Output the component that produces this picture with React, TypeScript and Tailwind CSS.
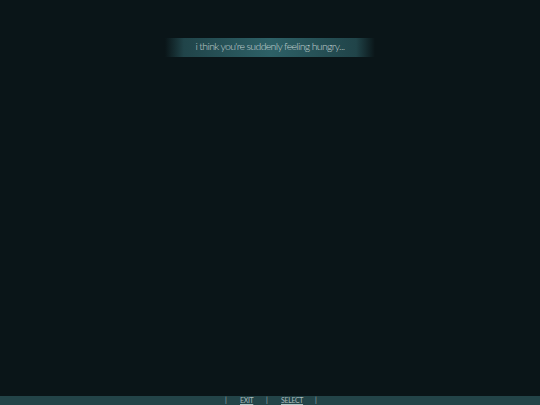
import React from "react";

export default function App() {
  return (
    <div className="flex h-[405px] w-[540px] flex-col bg-[#0a1518] font-['Lato','Open_Sans',sans-serif] text-[#b9c9c9]">
      <div className="flex flex-1 justify-center pt-[38px]">
        <div className="flex h-[19px] w-[210px] items-center justify-center pb-[2px] bg-[linear-gradient(90deg,rgba(42,88,94,0)_0%,rgba(42,88,94,0.7)_9%,#2d6066_50%,rgba(42,88,94,0.7)_91%,rgba(42,88,94,0)_100%)]">
          <span className="text-[10.5px] font-light leading-none tracking-[-0.65px] text-[#c4d2d2]">
            i think you're suddenly feeling hungry...
          </span>
        </div>
      </div>
      <div className="flex h-[9px] items-center bg-[#234448] pl-[225px] text-[7px] leading-none tracking-[-0.35px] text-[#a9bcbc]">
        <span className="w-[15px]">|</span>
        <span className="w-[26px] underline">EXIT</span>
        <span className="w-[15px]">|</span>
        <span className="w-[34px] underline">SELECT</span>
        <span>|</span>
      </div>
    </div>
  );
}
